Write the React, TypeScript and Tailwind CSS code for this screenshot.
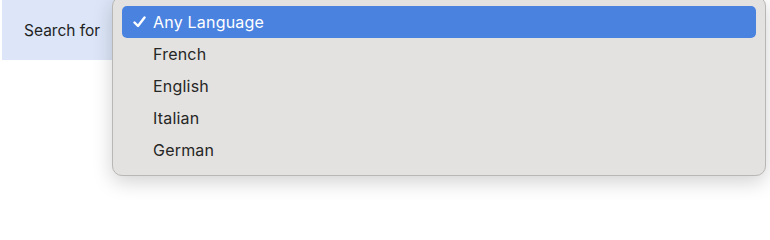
import React from "react";

const items = ["Any Language", "French", "English", "Italian", "German"];

export default function App() {
  return (
    <div className="relative w-[770px] h-[200px] bg-white overflow-hidden" style={{ fontFamily: "Inter, 'Liberation Sans', sans-serif" }}>
      <div className="ml-[2px] w-[200px] h-[60px] bg-[#dce6f8] flex items-center pl-[22px] pt-[1px] text-[15.5px] text-[#1f1f1f]">
        Search for
      </div>
      <div className="absolute left-[112px] top-[-4px] w-[654px] h-[180px] rounded-[10px] bg-[#e4e2e0] border border-[#b9b7b5] shadow-[0_6px_20px_rgba(0,0,0,0.18)] pt-[9px] px-[9px]">
        {items.map((it, i) => (
          <div
            key={it}
            className={
              "h-[32px] flex items-center rounded-[5px] text-[16px] tracking-[0.2px] " +
              (i === 0 ? "bg-[#4a82e0] text-white" : "text-[#262626]")
            }
          >
            <div className="w-[31px] flex justify-end pr-[7px]">
              {i === 0 && (
                <svg width="13" height="12" viewBox="0 0 13 12" fill="none">
                  <path d="M1.5 6.5 L5 10 L11.5 1.5" stroke="white" strokeWidth="2.4" strokeLinecap="round" strokeLinejoin="round" />
                </svg>
              )}
            </div>
            <span>{it}</span>
          </div>
        ))}
      </div>
    </div>
  );
}
